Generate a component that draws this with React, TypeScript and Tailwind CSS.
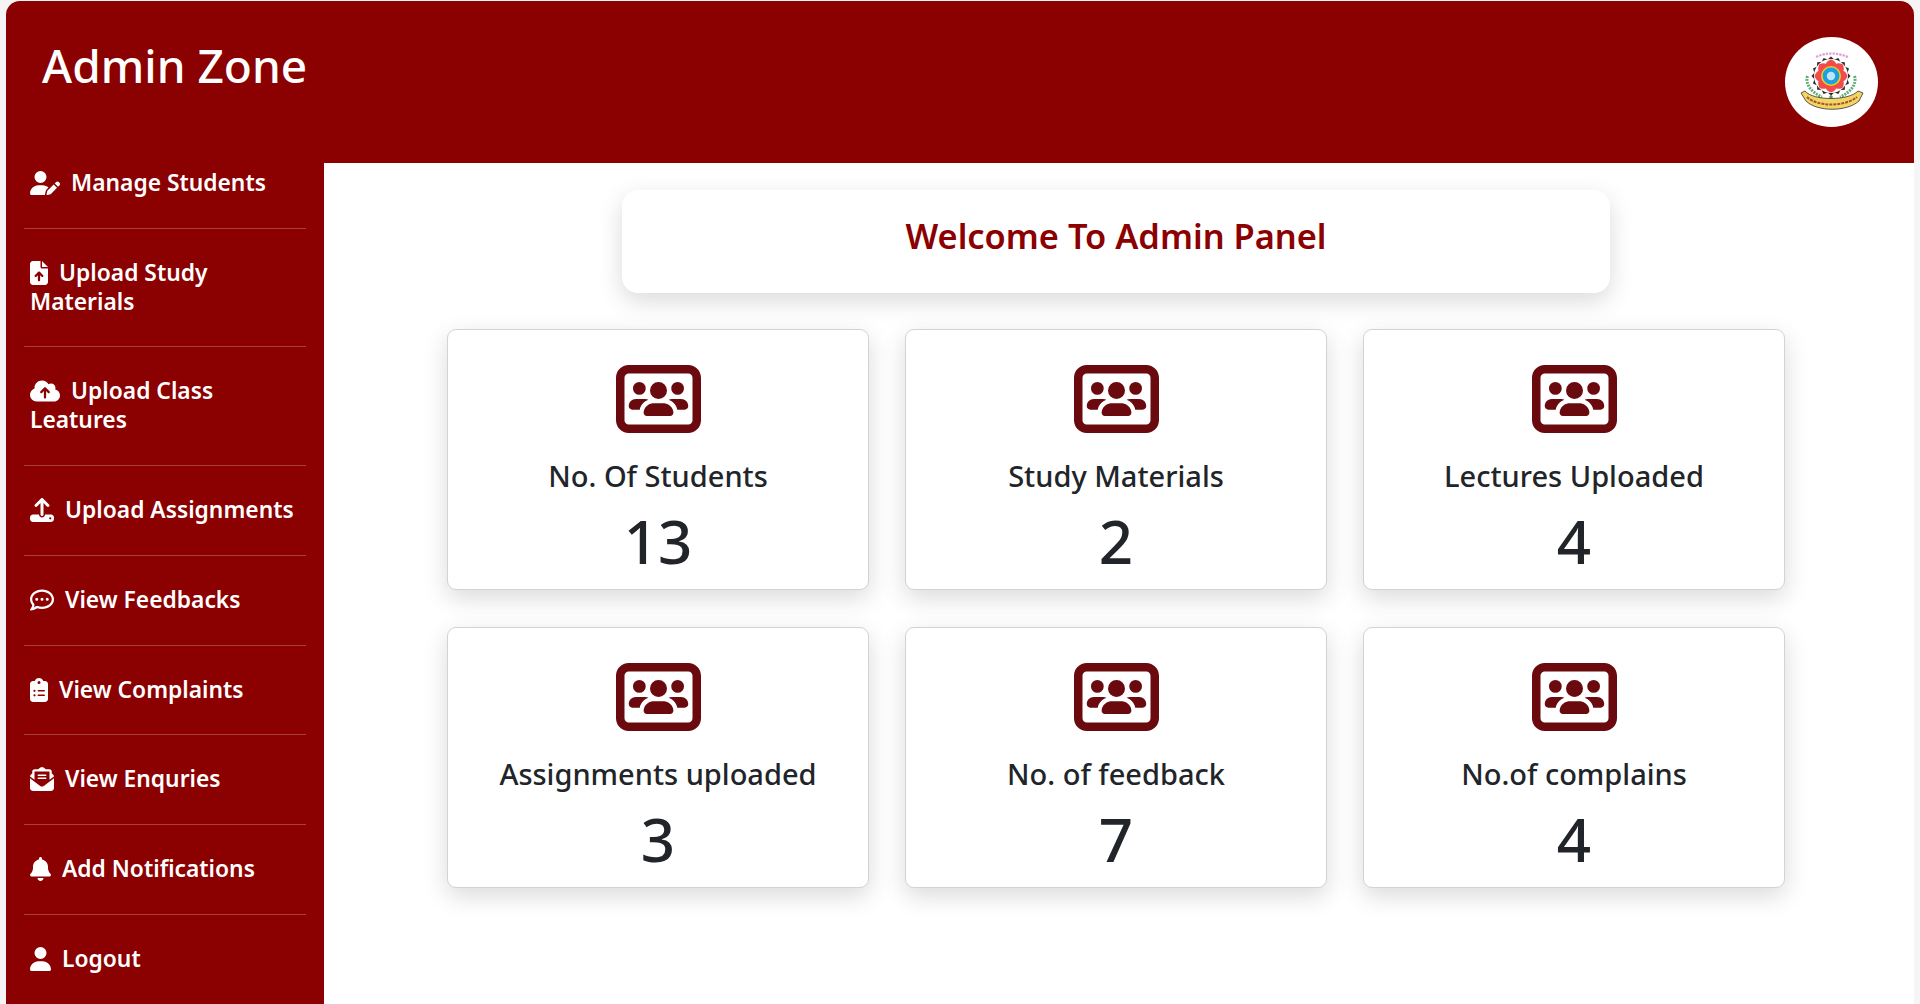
import type { ReactNode } from 'react';
import {
  FaUserPen,
  FaFileArrowUp,
  FaCloudArrowUp,
  FaUpload,
  FaRegCommentDots,
  FaClipboardList,
  FaEnvelopeOpenText,
  FaBell,
  FaUser,
  FaUsersRectangle,
} from 'react-icons/fa6';

type NavItem = { label: string; icon: ReactNode };

const navItems: NavItem[] = [
  { label: 'Manage Students', icon: <FaUserPen className="inline-block h-[24px] w-[30px] align-[-4px]" /> },
  { label: 'Upload Study Materials', icon: <FaFileArrowUp className="inline-block h-[24px] w-[18px] align-[-4px]" /> },
  { label: 'Upload Class Leatures', icon: <FaCloudArrowUp className="inline-block h-[24px] w-[30px] align-[-4px]" /> },
  { label: 'Upload Assignments', icon: <FaUpload className="inline-block h-[24px] w-[24px] align-[-4px]" /> },
  { label: 'View Feedbacks', icon: <FaRegCommentDots className="inline-block h-[24px] w-[24px] align-[-4px]" /> },
  { label: 'View Complaints', icon: <FaClipboardList className="inline-block h-[24px] w-[18px] align-[-4px]" /> },
  { label: 'View Enquries', icon: <FaEnvelopeOpenText className="inline-block h-[24px] w-[24px] align-[-4px]" /> },
  { label: 'Add Notifications', icon: <FaBell className="inline-block h-[24px] w-[21px] align-[-4px]" /> },
  { label: 'Logout', icon: <FaUser className="inline-block h-[24px] w-[21px] align-[-4px]" /> },
];

const stats = [
  { label: 'No. Of Students', value: 13 },
  { label: 'Study Materials', value: 2 },
  { label: 'Lectures Uploaded', value: 4 },
  { label: 'Assignments uploaded', value: 3 },
  { label: 'No. of feedback', value: 7 },
  { label: 'No.of complains', value: 4 },
];

function CollegeLogo() {
  const petals = [0, 45, 90, 135, 180, 225, 270, 315];
  const spikes = Array.from({ length: 16 }, (_, i) => i * 22.5);
  return (
    <svg viewBox="0 0 93 90" className="h-[90px] w-[93px]">
      <ellipse cx="46.5" cy="45" rx="46.5" ry="45" fill="#fff" />
      <path d="M31 20 Q46 13 63 20" fill="none" stroke="#e3a0d0" strokeWidth="2.2" strokeDasharray="2.4 1" />
      {spikes.map((a) => (
        <path key={a} d="M46 19.5 L52 25 L40 25 Z" fill="#2b2b2b" transform={`rotate(${a} 46 39)`} />
      ))}
      <circle cx="46" cy="39" r="17" fill="#fff" />
      {petals.map((a) => (
        <path key={a} d="M46 22.5 C53 25 53 30 46 34 C39 30 39 25 46 22.5 Z" fill="#f24b4b" transform={`rotate(${a} 46 39)`} />
      ))}
      <circle cx="46" cy="39" r="10" fill="#e3d21f" />
      <circle cx="46" cy="39" r="8.4" fill="#1c9fe3" />
      <circle cx="46" cy="39" r="4.2" fill="#bfe6f7" />
      <path d="M22.5 39 C20 47 26 55 37 60" fill="none" stroke="#5fae78" strokeWidth="3" strokeDasharray="2 1" />
      <path d="M69.5 39 C72 47 66 55 55 60" fill="none" stroke="#5fae78" strokeWidth="3" strokeDasharray="2 1" />
      <path d="M44 60 h4 M46 58 v4" stroke="#2f7d46" strokeWidth="1.2" />
      <path d="M16 56 L20 54 C28 64 64 64 73 54 L78 56 L74 64 C62 75 32 75 21 64 Z" fill="#f3d565" stroke="#33302a" strokeWidth="0.8" />
      <path d="M22 60 C32 70 60 70 72 60" fill="none" stroke="#a2562a" strokeWidth="2" strokeDasharray="3 1" />
    </svg>
  );
}

function StatCard({ label, value }: { label: string; value: number }) {
  return (
    <div className="flex h-[261px] flex-col items-center rounded-[9px] border border-[#d3d3d3] bg-white pt-[35px] shadow-[0_8px_24px_rgba(0,0,0,0.15)]">
      <FaUsersRectangle className="h-[68px] w-[85px] text-[#6b0a0e]" />
      <p className="mt-[23px] text-[29px] font-medium leading-[40px] text-[#212529]">{label}</p>
      <p className="mt-[3px] text-[60px] font-medium leading-[84px] text-[#212529]">{value}</p>
    </div>
  );
}

export default function App() {
  return (
    <div className="h-[1004px] overflow-hidden bg-[#f5f5f5] px-[6px] pt-[1px] font-['Noto_Sans',sans-serif]">
      <div className="flex h-full flex-col overflow-hidden rounded-t-[14px] bg-white">
        <header className="flex h-[162px] shrink-0 items-start justify-between bg-[#8b0000] pl-[36px] pr-[36px] pt-[36px]">
          <h1 className="-mt-[2px] text-[46px] font-medium leading-[60px] text-white">Admin Zone</h1>
          <CollegeLogo />
        </header>
        <div className="flex min-h-0 flex-1">
          <aside className="w-[318px] shrink-0 bg-[#8b0000] pl-[18px] pr-[18px]">
            {navItems.map((item, i) => (
              <a
                key={item.label}
                className={`block py-[30px] pl-[6px] text-[22.8px] font-semibold leading-[28.8px] text-white ${
                  i === 0 ? 'pt-[6px]' : ''
                } ${i === navItems.length - 1 ? '' : 'border-b border-white/25'}`}
              >
                <span className="mr-[11px]">{item.icon}</span>
                {item.label}
              </a>
            ))}
          </aside>
          <main className="min-w-0 flex-1 bg-white">
            <div className="ml-[298px] mt-[27px] flex h-[103px] w-[988px] items-center justify-center rounded-[16px] bg-white pb-[12px] shadow-[0_8px_24px_rgba(0,0,0,0.15)]">
              <h2 className="text-[34.4px] font-semibold text-[#8b0000]">Welcome To Admin Panel</h2>
            </div>
            <div className="ml-[123px] mt-[36px] grid w-[1338px] grid-cols-3 gap-x-[36px] gap-y-[37px]">
              {stats.map((s) => (
                <StatCard key={s.label} label={s.label} value={s.value} />
              ))}
            </div>
          </main>
        </div>
      </div>
    </div>
  );
}
